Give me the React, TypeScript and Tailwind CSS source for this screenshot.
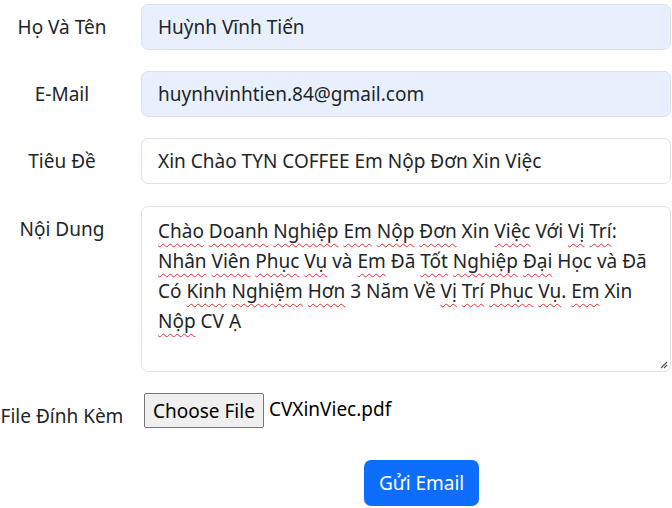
import React from "react";

const font = { fontFamily: '"Segoe UI", "Noto Sans", sans-serif' };

function Sq({ children }: { children: React.ReactNode }) {
  return (
    <span className="underline decoration-wavy decoration-[#e5322d] decoration-1 underline-offset-[5px]">
      {children}
    </span>
  );
}

function Row({ label, children, className = "" }: { label: string; children: React.ReactNode; className?: string }) {
  return (
    <div className={"flex gap-[17px] " + className}>
      <div className="w-[124px] shrink-0 py-[8px] text-center text-[19px] leading-[30px] whitespace-nowrap">
        {label}
      </div>
      <div className="w-[530px] shrink-0">{children}</div>
    </div>
  );
}

export default function App() {
  return (
    <div className="min-h-screen bg-white text-[#212529]" style={font}>
      <form className="flex flex-col gap-[21px] pt-[4px]">
        <Row label="Họ Và Tên">
          <input
            readOnly
            value="Huỳnh Vĩnh Tiến"
            className="block w-full h-[46px] rounded-[7px] border border-[#dee2e6] bg-[#e8f0fe] px-[16px] text-[19px] leading-[30px] outline-none"
          />
        </Row>
        <Row label="E-Mail">
          <input
            readOnly
            value="huynhvinhtien.84@gmail.com"
            className="block w-full h-[46px] rounded-[7px] border border-[#dee2e6] bg-[#e8f0fe] px-[16px] text-[19px] leading-[30px] outline-none"
          />
        </Row>
        <Row label="Tiêu Đề">
          <input
            readOnly
            value="Xin Chào TYN COFFEE Em Nộp Đơn Xin Việc"
            className="block w-full h-[46px] rounded-[7px] border border-[#dee2e6] bg-white px-[16px] text-[19px] leading-[30px] outline-none"
          />
        </Row>
        <Row label="Nội Dung" className="mt-[1px]">
          <div className="relative h-[166px] w-full rounded-[7px] border border-[#dee2e6] bg-white px-[16px] pt-[9px] text-[19px] leading-[30px]">
            <div className="whitespace-nowrap">
              <Sq>Chào</Sq> <Sq>Doanh</Sq> <Sq>Nghiệp</Sq> <Sq>Em</Sq> <Sq>Nộp</Sq> <Sq>Đơn</Sq> Xin <Sq>Việc</Sq> Với <Sq>Vị</Sq> <Sq>Trí</Sq>:
            </div>
            <div className="whitespace-nowrap">
              <Sq>Nhân</Sq> <Sq>Viên</Sq> <Sq>Phục</Sq> <Sq>Vụ</Sq> và <Sq>Em</Sq> Đã <Sq>Tốt</Sq> <Sq>Nghiệp</Sq> <Sq>Đại</Sq> Học và Đã
            </div>
            <div className="whitespace-nowrap">
              Có <Sq>Kinh</Sq> <Sq>Nghiệm</Sq> <Sq>Hơn</Sq> 3 Năm Về <Sq>Vị</Sq> <Sq>Trí</Sq> <Sq>Phục</Sq> <Sq>Vụ</Sq>. <Sq>Em</Sq> Xin
            </div>
            <div className="whitespace-nowrap">
              <Sq>Nộp</Sq> CV Ạ
            </div>
            <svg className="absolute bottom-[2px] right-[2px]" width="9" height="9" viewBox="0 0 9 9">
              <path d="M8 2 L2 8 M8 5 L5 8" stroke="#555" strokeWidth="1.2" />
            </svg>
          </div>
        </Row>
        <Row label="File Đính Kèm">
          <div className="flex items-start pl-[3px]">
            <button
              type="button"
              className="h-[35px] rounded-[2px] border border-[#767676] bg-[#efefef] px-[8px] text-[19px] leading-[30px] text-black"
            >
              Choose File
            </button>
            <span className="pl-[5px] text-[19px] leading-[33px] text-black">CVXinViec.pdf</span>
          </div>
        </Row>
        <div className="pl-[364px]">
          <button
            type="button"
            className="h-[46px] rounded-[7px] bg-[#0d6efd] px-[15px] text-[19px] leading-[30px] text-white"
          >
            Gửi Email
          </button>
        </div>
      </form>
    </div>
  );
}
